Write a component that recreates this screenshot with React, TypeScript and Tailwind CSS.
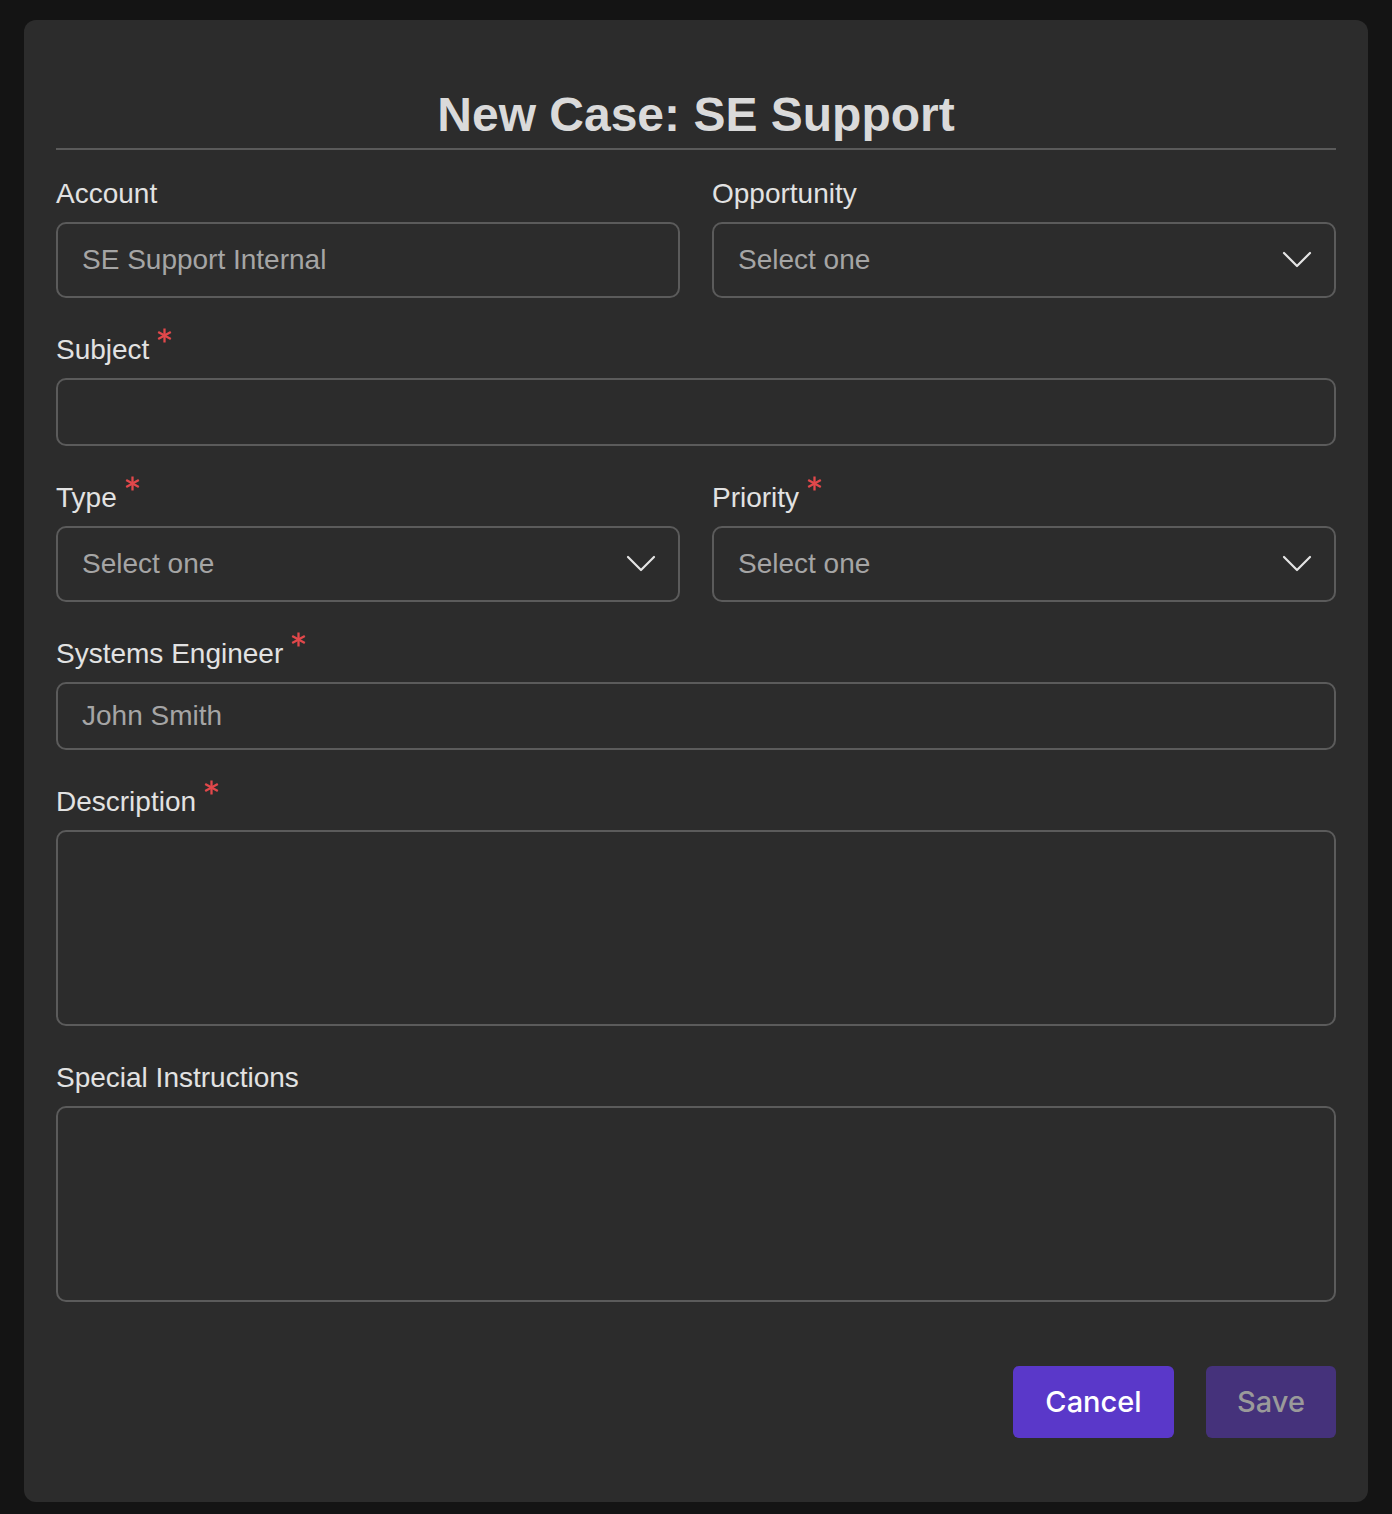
const FONT = { fontFamily: '"Liberation Sans", Arial, sans-serif' }

function Asterisk() {
  return (
    <svg width="15" height="15" viewBox="-7.5 -7.5 15 15" className="ml-2 -mt-[6px] shrink-0" aria-hidden>
      <g stroke="#e2484b" strokeWidth="2.3" strokeLinecap="butt">
        <line x1="0" y1="-7" x2="0" y2="7" />
        <line x1="-6.3" y1="-3.6" x2="6.3" y2="3.6" />
        <line x1="-6.3" y1="3.6" x2="6.3" y2="-3.6" />
      </g>
    </svg>
  )
}

function Chevron() {
  return (
    <svg width="30" height="18" viewBox="0 0 30 18" fill="none" aria-hidden>
      <path d="M2 2 L15 15 L28 2" stroke="#e4e4e4" strokeWidth="2.2" strokeLinecap="round" strokeLinejoin="round" />
    </svg>
  )
}

function Label({ text, required }: { text: string; required?: boolean }) {
  return (
    <div className="flex items-start mb-3 text-[28px] leading-8 text-[#e2e2e2]">
      <span>{text}</span>
      {required && <Asterisk />}
    </div>
  )
}

function Box({ value, select, tall }: { value?: string; select?: boolean; tall?: boolean }) {
  return (
    <div
      className={`flex items-center justify-between border-2 border-[#5b5b5b] rounded-[10px] pl-6 pr-[22px] text-[28px] text-[#a5a5a5] ${
        tall ? 'h-[76px]' : 'h-[68px]'
      }`}
    >
      <span>{value}</span>
      {select && <Chevron />}
    </div>
  )
}

function Area() {
  return <div className="h-[196px] border-2 border-[#5b5b5b] rounded-[10px]" />
}

export default function App() {
  return (
    <div className="min-h-[1514px] bg-[#141414] pt-5 pb-3 px-6" style={FONT}>
      <div className="bg-[#2c2c2c] rounded-xl px-8 pt-[67px] pb-16">
        <h1 className="text-center text-[48px] leading-[56px] font-bold text-[#dadada] pb-[5px] border-b-2 border-[#5a5a5a]">
          New Case: SE Support
        </h1>

        <div className="mt-7 flex flex-col gap-9">
          <div className="grid grid-cols-2 gap-8">
            <div>
              <Label text="Account" />
              <Box value="SE Support Internal" tall />
            </div>
            <div>
              <Label text="Opportunity" />
              <Box value="Select one" select tall />
            </div>
          </div>

          <div>
            <Label text="Subject" required />
            <Box />
          </div>

          <div className="grid grid-cols-2 gap-8">
            <div>
              <Label text="Type" required />
              <Box value="Select one" select tall />
            </div>
            <div>
              <Label text="Priority" required />
              <Box value="Select one" select tall />
            </div>
          </div>

          <div>
            <Label text="Systems Engineer" required />
            <Box value="John Smith" />
          </div>

          <div>
            <Label text="Description" required />
            <Area />
          </div>

          <div>
            <Label text="Special Instructions" />
            <Area />
          </div>
        </div>

        <div className="mt-16 flex justify-end gap-8" style={{ fontFamily: 'Inter, "Noto Sans", sans-serif' }}>
          <button className="w-[161px] h-[72px] rounded-md bg-[#5a38c9] text-white text-[29px] font-medium">
            Cancel
          </button>
          <button className="w-[130px] h-[72px] rounded-md bg-[#45327b] text-[#9a9a9a] text-[29px] font-medium">
            Save
          </button>
        </div>
      </div>
    </div>
  )
}
